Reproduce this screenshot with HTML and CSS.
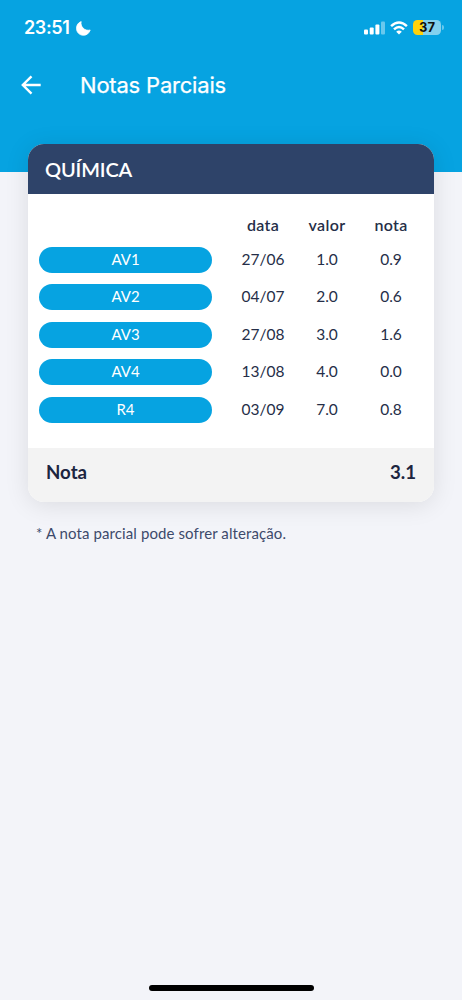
FILE: index.html
```html
<!DOCTYPE html>
<html lang="pt-BR">
<head>
<meta charset="utf-8">
<meta name="viewport" content="width=device-width, initial-scale=1">
<title>Notas Parciais</title>
<link rel="stylesheet" href="styles.css">
</head>
<body>
<div class="screen">
  <header class="top">
    <div class="status">
      <div class="clock">
        <span class="time">23:51</span>
        <svg class="moon" width="15" height="15" viewBox="0 0 15 15"><path d="M5.200.6C3.900 5.200 8.600 10.600 14.200 9 13 12.400 10.600 14.300 7.500 14.300 3.500 14.300.5 11.300.5 7.300.5 4.200 2.300 1.500 5.200.6Z" fill="#fff" stroke="#fff" stroke-width=".8" stroke-linejoin="round"/></svg>
      </div>
      <div class="indicators">
        <svg width="21" height="14" viewBox="0 0 21 14" fill="#fff"><rect x="0" y="8.500" width="4" height="5" rx="1"/><rect x="5.700" y="6.500" width="4" height="7" rx="1"/><rect x="11.400" y="3.500" width="4" height="10" rx="1"/><rect x="17" y=".5" width="4" height="13" rx="1" opacity=".4"/></svg>
        <svg width="18" height="14" viewBox="0 0 18 14"><g fill="none" stroke="#fff" stroke-width="2.500"><path d="M1.100 5.200Q9-2.200 16.900 5.200"/><path d="M4 8.400Q9 3.700 14 8.400"/></g><path d="M6.200 10.700Q9 8.200 11.800 10.700L9 13.600Z" fill="#fff"/></svg>
        <div class="battery"><span>37</span></div>
      </div>
    </div>
    <div class="appbar">
      <svg width="20" height="20" viewBox="0 0 20 20" fill="none" stroke="#fff" stroke-width="2.400"><path d="M19.700 10H2M10.500 1.300 1.800 10l8.700 8.700"/></svg>
      <h1>Notas Parciais</h1>
    </div>
  </header>
  <main class="content">
    <section class="card">
      <h2><span>QUÍMICA</span></h2>
      <div class="grades">
        <div class="row head"><span></span><b>data</b><b>valor</b><b>nota</b></div>
        <div class="row"><span class="pill">AV1</span><span>27/06</span><span>1.0</span><span>0.9</span></div>
        <div class="row"><span class="pill">AV2</span><span>04/07</span><span>2.0</span><span>0.6</span></div>
        <div class="row"><span class="pill">AV3</span><span>27/08</span><span>3.0</span><span>1.6</span></div>
        <div class="row"><span class="pill">AV4</span><span>13/08</span><span>4.0</span><span>0.0</span></div>
        <div class="row"><span class="pill">R4</span><span>03/09</span><span>7.0</span><span>0.8</span></div>
      </div>
      <div class="total"><span>Nota</span><span>3.1</span></div>
    </section>
    <p class="note">* A nota parcial pode sofrer alteração.</p>
  </main>
  <div class="home"></div>
</div>
</body>
</html>
```
FILE: styles.css
```css
* { box-sizing: border-box; }
body { margin: 0; background: #f3f4f9; font-family: Lato, "Open Sans", sans-serif; color: #252e48; }
.screen { height: 1000px; display: flex; flex-direction: column; background: #f3f4f9; overflow: hidden; }
.top { height: 172px; flex: none; background: #06a3e1; color: #fff; }
.status { height: 56px; padding: 0 21px 0 24px; display: flex; align-items: center; justify-content: space-between; }
.clock, .indicators { display: flex; align-items: center; }
.clock { gap: 6px; }
.time { font: 600 18px/22px Inter, sans-serif; letter-spacing: -.35px; }
.indicators { gap: 5px; padding-bottom: 1px; }
.battery { position: relative; width: 28px; height: 15px; border-radius: 4.500px; background: linear-gradient(90deg, #ffd20a 10px, #83d1ee 10px); color: #111; text-align: center; font: 700 13px/15px Inter, sans-serif; }
.battery::after { content: ""; position: absolute; left: 29px; top: 5px; width: 2px; height: 5px; border-radius: 0 2px 2px 0; background: #68c8ed; }
.appbar { height: 58px; padding-left: 21px; display: flex; align-items: center; gap: 39px; }
h1 { margin: 0; font: 400 22px/28px Inter, sans-serif; letter-spacing: -.2px; -webkit-text-stroke: .25px #fff; }
.content { flex: 1; padding: 0 28px; margin-top: -28px; }
.card { border-radius: 16px; overflow: hidden; background: #fff; box-shadow: 0 3px 24px rgba(0, 0, 0, .1); }
h2 { margin: 0; height: 50px; padding: 0 17px; background: #2e4369; color: #fff; font-size: 20px; line-height: 50px; font-weight: 600; letter-spacing: -.15px; }
.grades { height: 254px; padding: 19px 11px 0; display: flex; flex-direction: column; gap: 11.400px; font-size: 15.500px; }
.row { display: grid; grid-template-columns: 173px 19px 64px 64px 64px; height: 26px; line-height: 25px; text-align: center; }
.row > :nth-child(2) { grid-column: 3; }
.head { margin-bottom: -3.400px; line-height: 24px; font-size: 16px; letter-spacing: .35px; }
.head b { font-weight: 600; }
.pill { height: 26px; border-radius: 13px; background: #06a3e1; color: #fff; font-size: 15px; line-height: 25px; }
.total { height: 54px; padding: 0 18px; background: #f3f3f3; display: flex; justify-content: space-between; font-size: 18.700px; line-height: 48px; font-weight: 700; color: #1c2540; }
.note { margin: 21px 8px 0; font-size: 15px; line-height: 20px; letter-spacing: .1px; color: #3d4a6b; }
.home { width: 165px; height: 6px; margin: 0 auto 9px; border-radius: 3px; background: #000; }
```
